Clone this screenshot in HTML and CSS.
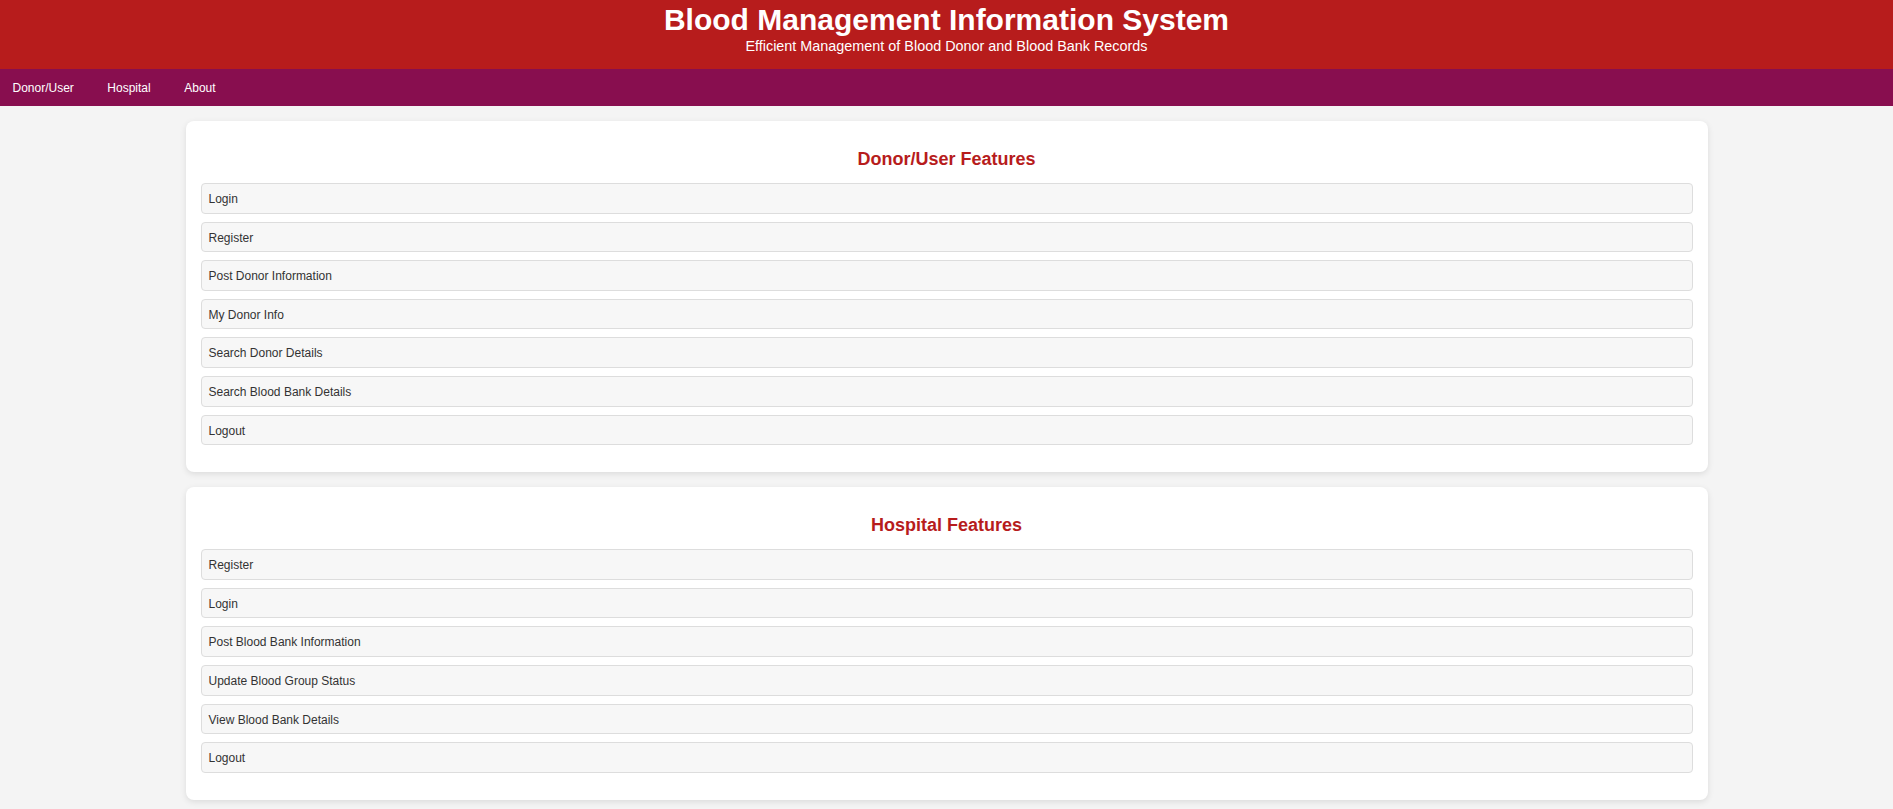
FILE: index.html
```html
<!DOCTYPE html>
<html lang="en">
<head>
<meta charset="utf-8">
<title>Blood Management Information System</title>
<link rel="stylesheet" href="styles.css">
</head>
<body>
<header class="site-header">
  <h1 class="site-title">Blood Management Information System</h1>
  <p class="site-subtitle">Efficient Management of Blood Donor and Blood Bank Records</p>
</header>
<nav class="main-nav">
  <a href="#donor" class="nav-link">Donor/User</a>
  <a href="#hospital" class="nav-link">Hospital</a>
  <a href="#about" class="nav-link">About</a>
</nav>
<main class="content">
  <section class="card" id="donor">
    <h2 class="card-title">Donor/User Features</h2>
    <ul class="feature-list">
      <li class="feature-item">Login</li>
      <li class="feature-item">Register</li>
      <li class="feature-item">Post Donor Information</li>
      <li class="feature-item">My Donor Info</li>
      <li class="feature-item">Search Donor Details</li>
      <li class="feature-item">Search Blood Bank Details</li>
      <li class="feature-item">Logout</li>
    </ul>
  </section>
  <section class="card" id="hospital">
    <h2 class="card-title">Hospital Features</h2>
    <ul class="feature-list">
      <li class="feature-item">Register</li>
      <li class="feature-item">Login</li>
      <li class="feature-item">Post Blood Bank Information</li>
      <li class="feature-item">Update Blood Group Status</li>
      <li class="feature-item">View Blood Bank Details</li>
      <li class="feature-item">Logout</li>
    </ul>
  </section>
</main>
</body>
</html>
```
FILE: styles.css
```css
* { box-sizing: border-box; }

body {
  margin: 0;
  background: #f4f4f4;
  font-family: "Liberation Sans", Arial, sans-serif;
  font-size: 12px;
  color: #333;
}

.site-header {
  background: #b71c1c;
  color: #fff;
  text-align: center;
  height: 69px;
  padding-top: 3px;
}

.site-title {
  margin: 0;
  font-size: 30px;
  font-weight: bold;
  line-height: 34.5px;
}

.site-subtitle {
  margin: 0;
  font-size: 14.4px;
  line-height: 16.5px;
}

.main-nav {
  background: #880e4f;
  height: 37px;
  display: flex;
  align-items: center;
  gap: 33.5px;
  padding-left: 12.5px;
  padding-top: 1px;
}

.nav-link {
  color: #fff;
  text-decoration: none;
  font-size: 12px;
  line-height: 14px;
}

.content {
  display: flex;
  flex-direction: column;
  gap: 15px;
  padding-top: 15px;
  padding-bottom: 15px;
}

.card {
  width: 1522px;
  margin: 0 auto;
  background: #fff;
  border-radius: 8px;
  box-shadow: 0 2px 6px rgba(0, 0, 0, 0.1);
  padding: 15px 15px 27px;
}

.card-title {
  margin: 13px 0 13px;
  text-align: center;
  color: #b71c1c;
  font-size: 18px;
  line-height: 21px;
  font-weight: bold;
}

.feature-list {
  list-style: none;
  margin: 0;
  padding: 0;
  display: flex;
  flex-direction: column;
  gap: 8px;
}

.feature-item {
  background: #f7f7f7;
  border: 1px solid #ddd;
  border-radius: 4px;
  padding: 8px 7px 6px;
  line-height: 14.6px;
  font-size: 12px;
  color: #333;
}
```
